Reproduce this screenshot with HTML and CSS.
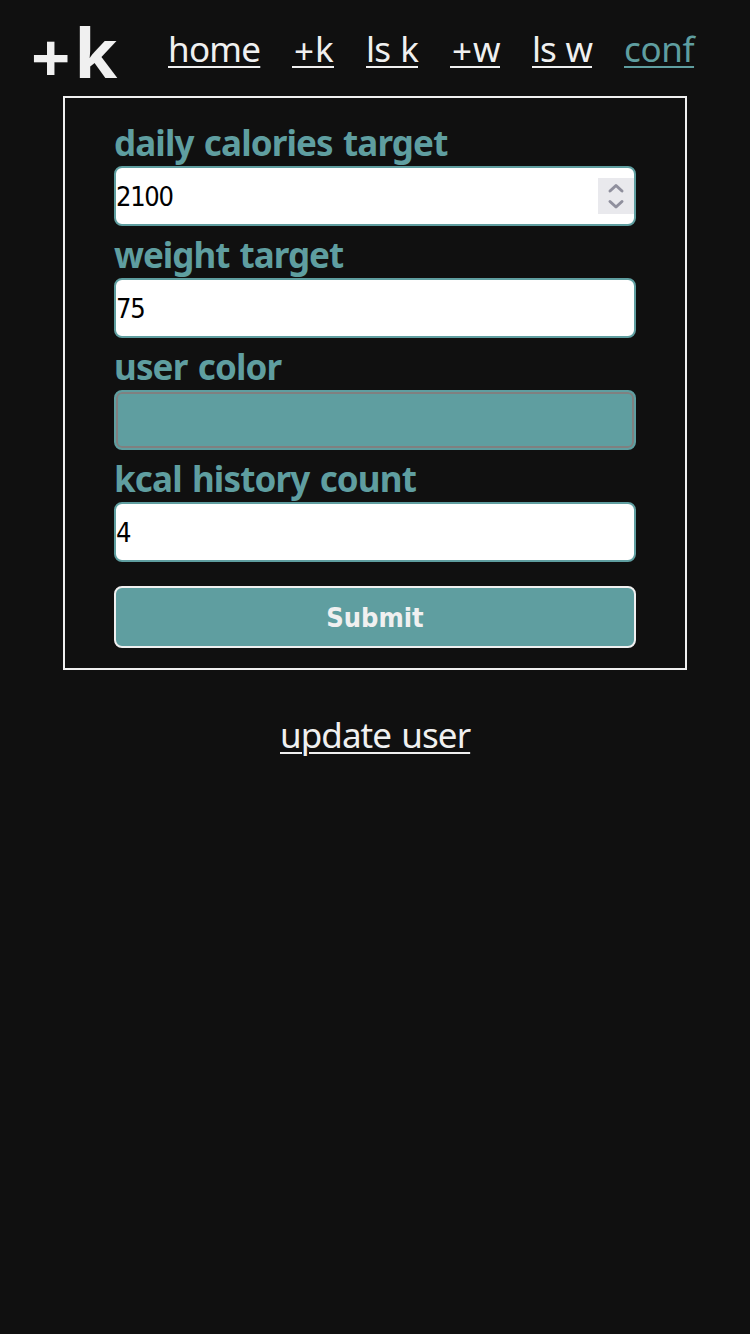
FILE: index.html
```html
<!DOCTYPE html>
<html lang="en">
<head>
<meta charset="utf-8">
<title>+k</title>
<link rel="stylesheet" href="styles.css">
</head>
<body>
<header class="bar">
<h1 class="logo"><span class="plus">+</span>k</h1>
<nav class="nav">
<a class="link home">home</a>
<a class="link addk"><span class="sign">+</span>k</a>
<a class="link lsk">ls k</a>
<a class="link addw"><span class="sign">+</span>w</a>
<a class="link lsw">ls w</a>
<a class="link conf">conf</a>
</nav>
</header>
<main class="main">
<form class="card">
<label class="label l1">daily calories target</label>
<div class="field"><span class="value">2100</span><span class="spin"><svg width="36" height="36" viewBox="0 0 36 36"><path d="M12 13 18 7.5 24 13M12 23.5 18 29 24 23.5" fill="none" stroke="#8f8f9d" stroke-width="3" stroke-linecap="round" stroke-linejoin="round"/></svg></span></div>
<label class="label l2">weight target</label>
<div class="field"><span class="value">75</span></div>
<label class="label l3">user color</label>
<div class="field swatch"></div>
<label class="label l4">kcal history count</label>
<div class="field"><span class="value">4</span></div>
<button class="submit" type="button">Submit</button>
</form>
<a class="link update">update user</a>
</main>
</body>
</html>
```
FILE: styles.css
```css
* { box-sizing: border-box; }
body { margin: 0; min-height: 1334px; background: #101010; color: #f0f0f0; font-family: "Noto Sans", "Open Sans", sans-serif; }
.bar { height: 96px; display: flex; padding-left: 32px; }
.logo { margin: 0; width: 136px; padding-top: 5px; font-size: 69px; line-height: 92px; font-weight: 700; white-space: nowrap; }
.plus { display: inline-block; transform: translate(-1px, 5px); margin-right: 3px; }
.nav { display: flex; gap: 32px; padding-top: 29px; }
.link { display: block; height: 39px; font-size: 35px; line-height: 39px; white-space: nowrap; text-decoration: underline; text-decoration-thickness: 2px; text-underline-offset: 4px; }
.home { width: 92px; letter-spacing: -0.75px; }
.addk, .addw { text-decoration: none; border-bottom: 2px solid currentColor; }
.addk { width: 42px; }
.sign { display: inline-block; transform: translate(2px, 2px); margin-right: 3px; }
.lsk { width: 52px; letter-spacing: -0.9px; word-spacing: 2px; }
.addw { width: 50px; }
.lsw { width: 60px; letter-spacing: -1.1px; word-spacing: 2px; }
.conf { width: 70px; color: #5f9ea0; letter-spacing: -0.4px; }
.main { display: flex; flex-direction: column; align-items: center; }
.card { width: 624px; height: 574px; border: 2px solid #f0f0f0; padding: 20px 49px; display: flex; flex-direction: column; }
.label { height: 48px; line-height: 50px; color: #5f9ea0; font-size: 35px; font-weight: 700; white-space: nowrap; word-spacing: 2px; }
.l1 { letter-spacing: -0.87px; }
.l2 { letter-spacing: -1px; }
.l3 { letter-spacing: -0.85px; }
.l4 { letter-spacing: -0.86px; }
.field { height: 60px; margin-bottom: 4px; border: 2px solid #5f9ea0; border-radius: 8px; background: #fff; color: #000; font: 27px "DejaVu Sans Condensed", "DejaVu Sans", sans-serif; font-stretch: condensed; display: flex; align-items: center; justify-content: space-between; }
.value { letter-spacing: -1.3px; }
.spin { width: 36px; height: 36px; background: #e9e9ed; }
.spin svg { display: block; }
.swatch { background: #5f9ea0; box-shadow: inset 0 0 0 2px #808080; }
.submit { height: 62px; margin-top: 20px; padding: 0; border: 2px solid #f0f0f0; border-radius: 8px; background: #5f9ea0; color: #f0f0f0; font: 700 27px "DejaVu Sans Condensed", "DejaVu Sans", sans-serif; font-stretch: condensed; }
.update { width: 190px; margin-top: 45px; letter-spacing: -0.93px; word-spacing: 2px; }
```
